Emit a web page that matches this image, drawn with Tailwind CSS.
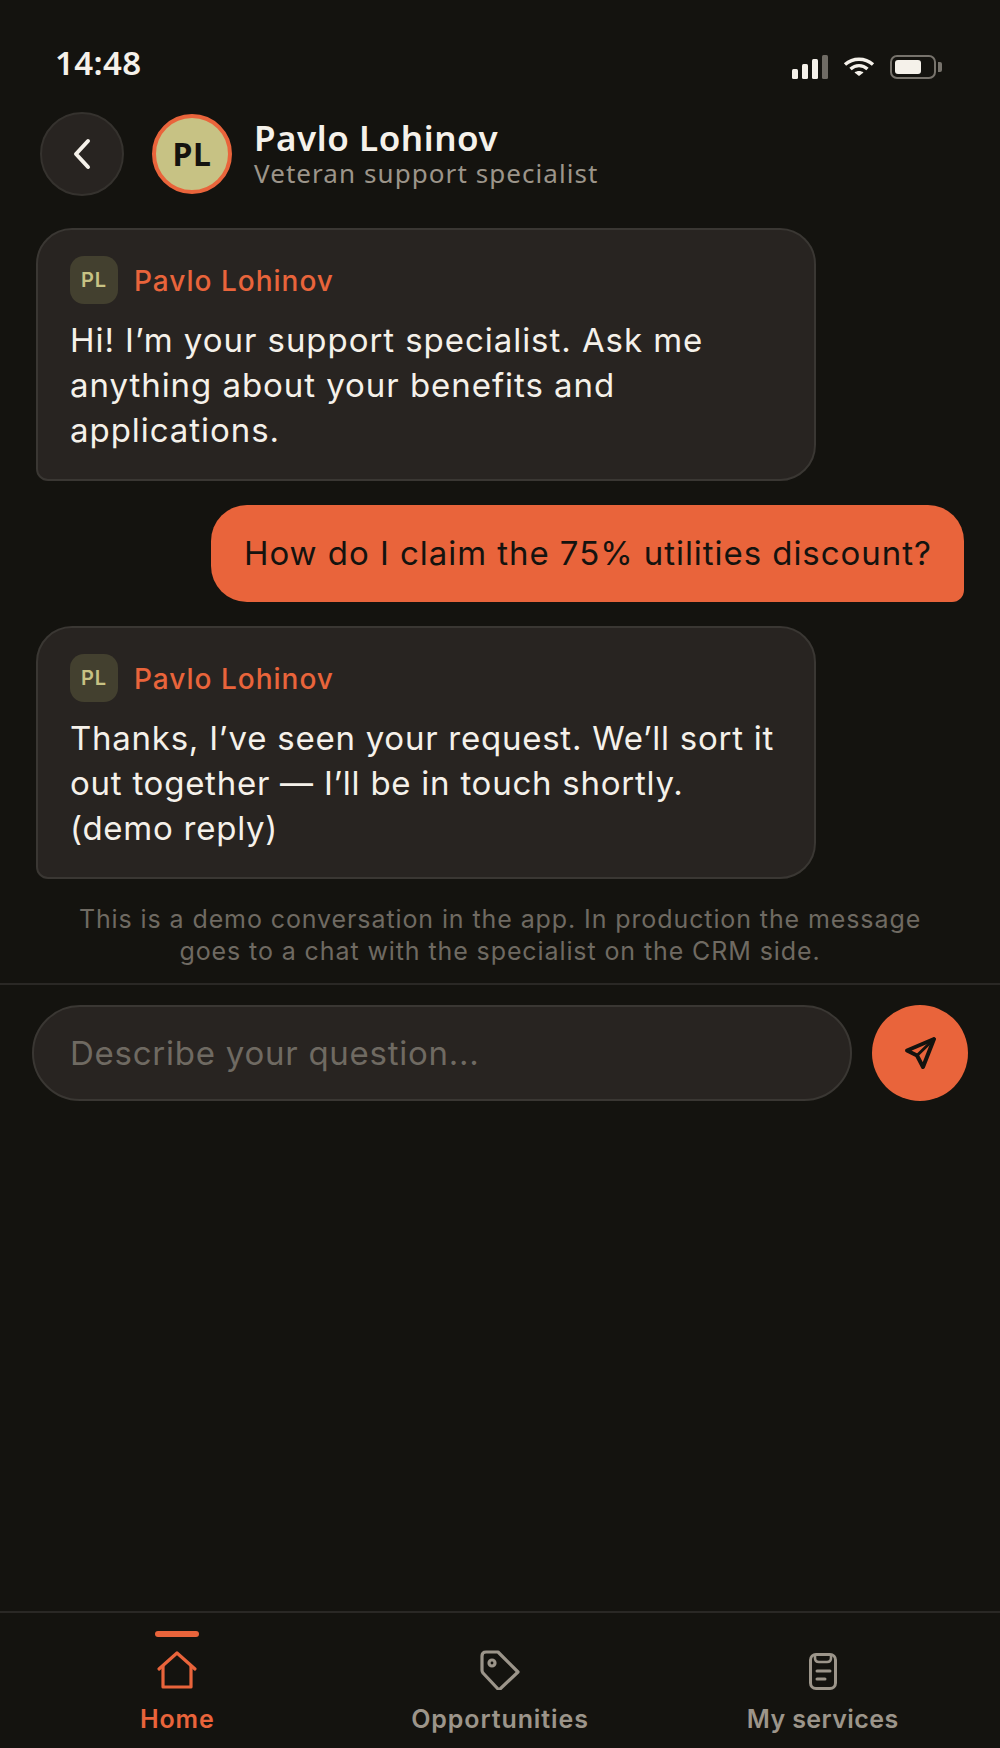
<!doctype html>
<html>
  <head>
    <meta charset="UTF-8" />
    <title>Support chat</title>
    <script src="https://cdn.jsdelivr.net/npm/@tailwindcss/browser@4"></script>
  </head>
  <body class="h-[1748px] w-[1000px] overflow-hidden bg-[#14130f] font-['Inter',sans-serif] text-[#f5f1ea]">
    <div class="flex h-full flex-col">
      <!-- status bar -->
      <div class="flex h-[112px] shrink-0 items-start justify-between pt-[44px] pr-[58px] pl-[55px]">
        <span class="font-['Noto_Sans',sans-serif] text-[33px] leading-[38px] font-semibold tracking-[0.4px]">14:48</span>
        <div class="flex items-center gap-[15px] pt-[11px]">
          <svg width="36" height="24" viewBox="0 0 36 24">
            <rect x="0" y="14" width="6" height="10" rx="1.5" fill="#f5f1ea" />
            <rect x="10" y="9" width="6" height="15" rx="1.5" fill="#f5f1ea" />
            <rect x="20" y="4" width="6" height="20" rx="1.5" fill="#f5f1ea" />
            <rect x="30" y="0" width="6" height="24" rx="1.5" fill="#6f6b64" />
          </svg>
          <svg width="32" height="20" viewBox="0 0 32 20" fill="none" stroke="#f5f1ea" stroke-width="3.4">
            <path d="M2 7.5C10 0.5 22 0.5 30 7.5" />
            <path d="M7.5 12C12.5 7.5 19.5 7.5 24.500 12" />
            <path d="M16 19L11.500 15.500C14 13.500 18 13.500 20.500 15.500Z" fill="#f5f1ea" stroke="none" />
          </svg>
          <div class="flex items-center gap-[2px]">
            <div class="flex h-[24px] w-[46px] items-center rounded-[7px] border-2 border-[#77736c] px-[3px]">
              <div class="h-[14px] w-[26px] rounded-[3px] bg-[#f5f1ea]"></div>
            </div>
            <div class="h-[10px] w-[4px] rounded-r-[2px] bg-[#77736c]"></div>
          </div>
        </div>
      </div>

      <!-- header -->
      <div class="flex h-[84px] shrink-0 items-center pl-[40px]">
        <button class="flex size-[84px] items-center justify-center rounded-full border-2 border-[#35322e] bg-[#282421]">
          <svg width="22" height="32" viewBox="0 0 22 32" fill="none" stroke="#f5f1ea" stroke-width="4" stroke-linecap="round" stroke-linejoin="round">
            <path d="M17 3L5 16L17 29" />
          </svg>
        </button>
        <div class="ml-[28px] flex size-[80px] items-center justify-center rounded-full border-4 border-[#e9643b] bg-[#c7c284] font-['Noto_Sans',sans-serif] text-[32px] font-bold tracking-[0.5px] text-[#14130f]">PL</div>
        <div class="-mt-[2px] ml-[22px] font-['Noto_Sans',sans-serif]">
          <div class="text-[35px] leading-[40px] font-semibold tracking-[0.55px]">Pavlo Lohinov</div>
          <div class="text-[26px] leading-[30px] tracking-[1.07px] text-[#9c958a]">Veteran support specialist</div>
        </div>
      </div>

      <!-- messages -->
      <div class="flex flex-col gap-[24px] px-[36px] pt-[32px]">
        <div class="h-[253px] w-[780px] rounded-[36px] rounded-bl-[12px] border-2 border-[#3a3733] bg-[#282421] px-[32px] pt-[26px]">
          <div class="flex items-center gap-[16px]">
            <div class="flex size-[48px] items-center justify-center rounded-[14px] bg-[#43402f] text-[20px] font-semibold tracking-[1px] text-[#c7c284]">PL</div>
            <span class="pt-[2px] text-[28px] font-medium tracking-[1px] text-[#e9643b]">Pavlo Lohinov</span>
          </div>
          <p class="mt-[14px] text-[33px] leading-[45px] tracking-[0.95px]">Hi! I’m your support specialist. Ask me anything about your benefits and applications.</p>
        </div>

        <div class="flex h-[97px] w-[753px] items-center self-end rounded-[36px] rounded-br-[12px] bg-[#e9643b] pl-[33px] text-[33px] tracking-[0.95px] whitespace-nowrap text-[#14130f]">How do I claim the 75% utilities discount?</div>

        <div class="h-[253px] w-[780px] rounded-[36px] rounded-bl-[12px] border-2 border-[#3a3733] bg-[#282421] px-[32px] pt-[26px]">
          <div class="flex items-center gap-[16px]">
            <div class="flex size-[48px] items-center justify-center rounded-[14px] bg-[#43402f] text-[20px] font-semibold tracking-[1px] text-[#c7c284]">PL</div>
            <span class="pt-[2px] text-[28px] font-medium tracking-[1px] text-[#e9643b]">Pavlo Lohinov</span>
          </div>
          <p class="mt-[14px] text-[33px] leading-[45px] tracking-[0.75px]">Thanks, I’ve seen your request. We’ll sort it out together — I’ll be in touch shortly. (demo reply)</p>
        </div>
      </div>

      <p class="mx-auto mt-[24px] w-[890px] text-center text-[25px] leading-[32px] tracking-[0.9px] text-[#6f6a62]">This is a demo conversation in the app. In production the message goes to a chat with the specialist on the CRM side.</p>

      <!-- composer -->
      <div class="mt-[16px] flex items-center gap-[20px] border-t-2 border-[#2a2825] px-[32px] pt-[20px]">
        <div class="flex h-[96px] w-[820px] items-center rounded-full border-2 border-[#3a3733] bg-[#282421] pt-[2px] pl-[36px] text-[33px] tracking-[0.75px] text-[#6f6a62]">Describe your question...</div>
        <button class="flex size-[96px] items-center justify-center rounded-full bg-[#e9643b]">
          <svg width="36" height="36" viewBox="0 0 36 36" fill="none" stroke="#14130f" stroke-width="4" stroke-linecap="round" stroke-linejoin="round">
            <path d="M32 4L5 15.500L15 20.500L21 32Z" />
            <path d="M32 4L15 20.500" stroke-width="3" />
          </svg>
        </button>
      </div>

      <!-- tab bar -->
      <nav class="mt-auto grid h-[137px] shrink-0 grid-cols-3 border-t-2 border-[#2a2825] px-[16px]">
        <a class="relative flex flex-col items-center pt-[37px] text-[#e9643b]">
          <span class="absolute top-[18px] h-[6px] w-[44px] rounded-full bg-[#e9643b]"></span>
          <svg width="42" height="40" viewBox="0 0 42 40" fill="none" stroke="currentColor" stroke-width="3.200" stroke-linejoin="round" stroke-linecap="round">
            <path d="M3 19L21 3L39 19" />
            <path d="M7 16V37H35V16" />
          </svg>
          <span class="mt-[14px] text-[25px] leading-[30px] font-semibold tracking-[0.85px]">Home</span>
        </a>
        <a class="flex flex-col items-center pt-[37px] text-[#9c958a]">
          <svg width="42" height="40" viewBox="0 0 42 40" fill="none" stroke="currentColor" stroke-width="3.200" stroke-linejoin="round">
            <path d="M3 6Q3 2 7 2H19L39 22L20 40L4 23Q3 22 3 20Z" />
            <circle cx="13" cy="13" r="3" />
          </svg>
          <span class="mt-[14px] text-[25px] leading-[30px] font-semibold tracking-[0.9px]">Opportunities</span>
        </a>
        <a class="flex flex-col items-center pt-[37px] text-[#9c958a]">
          <svg width="42" height="40" viewBox="0 0 42 40" fill="none" stroke="currentColor" stroke-width="3" stroke-linecap="round">
            <rect x="8.500" y="4.500" width="25" height="34" rx="5.500" />
            <path d="M13 5V8Q13 12 17 12H25Q29 12 29 8V5" stroke-width="2.600" />
            <path d="M15 21H28" />
            <path d="M15 29H23" />
          </svg>
          <span class="mt-[14px] text-[25px] leading-[30px] font-semibold tracking-[0.4px]">My services</span>
        </a>
      </nav>
    </div>
  </body>
</html>
